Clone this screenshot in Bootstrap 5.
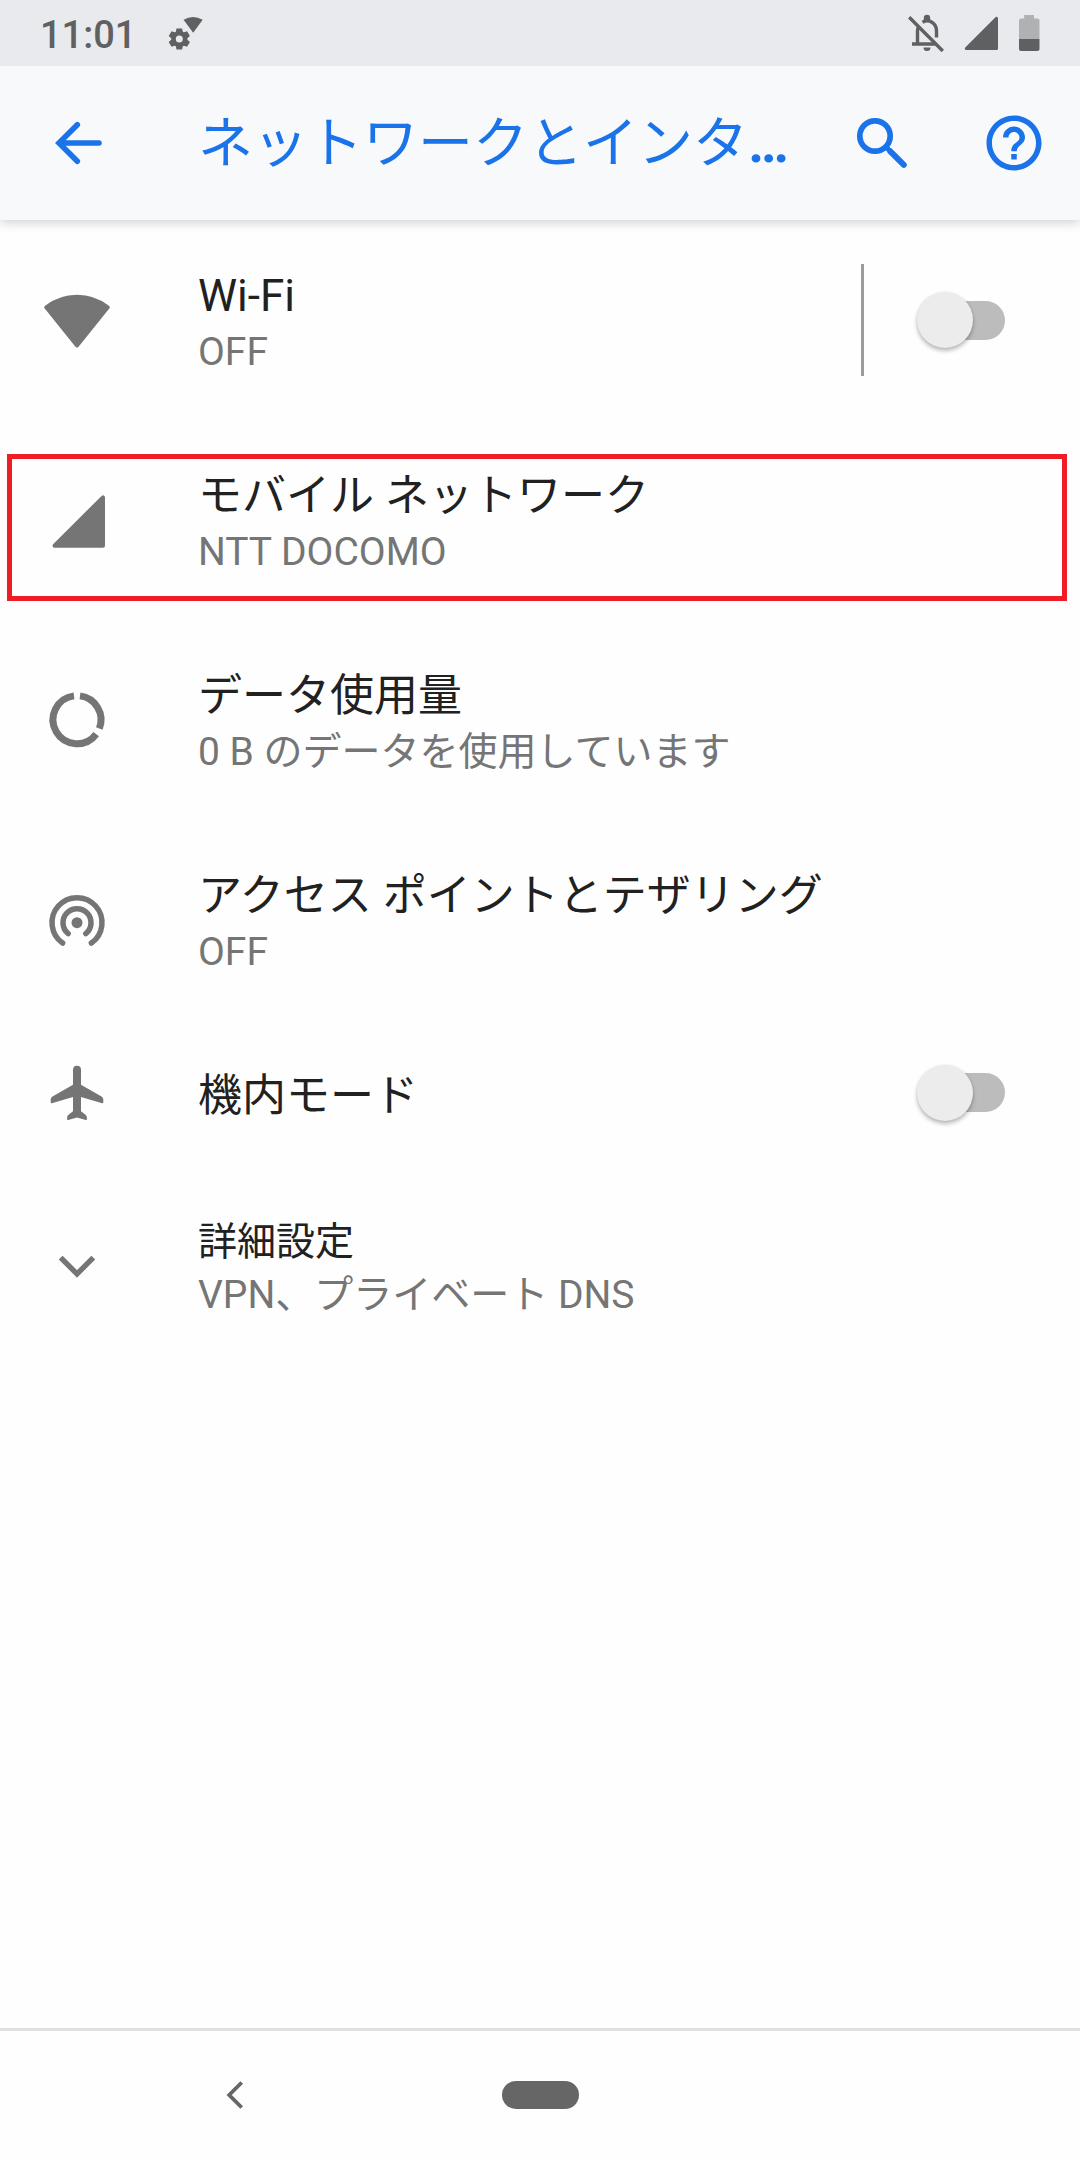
<!DOCTYPE html>
<html lang="ja">
<head>
<meta charset="utf-8">
<meta name="viewport" content="width=device-width, initial-scale=1">
<title>ネットワークとインターネット</title>
<link rel="stylesheet" href="https://cdn.jsdelivr.net/npm/bootstrap@5.3.0/dist/css/bootstrap.min.css">
<style>
  body { font-family: Roboto, "Noto Sans CJK JP", sans-serif; background: #fefefe; color: #212121; }
  svg { display: block; flex: none; }
  .screen { width: 1080px; height: 2160px; }
  .status-bar { height: 66px; background: #e8eaed; color: #5f6062; padding: 0 40px; position: relative; z-index: 2; }
  .clock { font-size: 38px; line-height: 44px; font-weight: 500; width: 128px; padding-top: 3px; }
  .app-bar { height: 154px; background: #f8f9fb; color: #1a73e8; padding: 0 33px 0 44px; box-shadow: 0 2px 11px rgba(0,0,0,.2); z-index: 1; }
  .app-title { font-size: 55px; line-height: 66px; width: 600px; margin: 0 50px 0 88px; font-weight: 400; }
  .app-title b { font-weight: 700; }
  .settings { padding-top: 2px; }
  .setting { height: 200px; padding-left: 44px; padding-right: 75px; }
  .setting-single { height: 148px; }
  .setting-more { height: 196px; }
  .setting svg { color: #757575; margin-right: 88px; }
  .label { font-size: 44px; line-height: 60px; }
  .setting-more .label { font-size: 39px; line-height: 54px; }
  .summary { font-size: 39px; line-height: 52px; color: #757575; }
  .divider { width: 3px; height: 112px; background: #9b9b9b; margin: 0 53px 4px 0; }
  .toggle { width: 88px; height: 56px; margin-bottom: 4px; }
  .setting-single .toggle { margin-bottom: 7px; }
  .toggle-track { width: 78px; height: 39px; background: #bcbcbc; }
  .toggle-thumb { width: 56px; height: 56px; background: #ececec; box-shadow: 0 3px 4px rgba(0,0,0,.26), 0 0 3px rgba(0,0,0,.08); }
  .highlight { left: 7px; top: 32px; width: 1060px; height: 147px; border: 5px solid #ee1c25; }
  .nav-bar { height: 132px; border-top: 3px solid #e0e0e0; color: #666; padding: 0 0 2px 226px; }
  .home-pill { width: 77px; height: 28px; background: #666; margin-left: 258px; }
</style>
<script src="https://cdn.jsdelivr.net/npm/bootstrap@5.3.0/dist/js/bootstrap.bundle.min.js"></script>
</head>
<body>
<div class="screen d-flex flex-column overflow-hidden">
  <div class="status-bar d-flex align-items-center">
    <span class="clock">11:01</span>
    <svg width="36" height="38" viewBox="0 0 36 38" fill="currentColor">
      <path d="M15.500 5.800Q25 .200 34.700 5.800L25.200 18.800Z"/>
      <g transform="translate(11.300 25)">
        <circle r="5.800" fill="none" stroke="currentColor" stroke-width="4.600"/>
        <path d="M-2.800-10.600h5.600l.8 4h-7.200z"/>
        <path d="M-2.800-10.600h5.600l.8 4h-7.200z" transform="rotate(60)"/>
        <path d="M-2.800-10.600h5.600l.8 4h-7.200z" transform="rotate(120)"/>
        <path d="M-2.800-10.600h5.600l.8 4h-7.200z" transform="rotate(180)"/>
        <path d="M-2.800-10.600h5.600l.8 4h-7.200z" transform="rotate(240)"/>
        <path d="M-2.800-10.600h5.600l.8 4h-7.200z" transform="rotate(300)"/>
      </g>
    </svg>
    <svg class="ms-auto" width="36" height="38" viewBox="0 0 36 38" fill="none" stroke="currentColor" stroke-width="3.400">
      <path d="M1.200 3.300L34.800 37"/>
      <path d="M4 30H28M9.500 31V17Q9.500 14.500 10.600 12.500M14.500 8.200C21 4.500 28.500 9 28.500 17V23.500"/>
      <path d="M15.800 7V4A3.200 3.200 0 0 1 22.200 4V7ZM15.500 33.500H22.500A3.500 3.500 0 0 1 15.500 33.500Z" fill="currentColor" stroke="none"/>
    </svg>
    <svg style="margin-left:20px" width="35" height="38" viewBox="0 0 35 38" fill="currentColor" stroke="currentColor" stroke-width="3" stroke-linejoin="round"><path d="M32.500 4.300V34.500H2.300Z"/></svg>
    <svg style="margin-left:20px" width="21" height="38" viewBox="0 0 21 38">
      <path d="M5.200 1H15V4.500H18.500Q20.500 4.500 20.500 6.500V25H0V6.500Q0 4.500 2 4.500H5.200Z" fill="#b0b1b3"/>
      <path d="M0 25H20.500V35Q20.500 37 18.500 37H2Q0 37 0 35Z" fill="currentColor"/>
    </svg>
  </div>

  <header class="app-bar d-flex align-items-center position-relative">
    <svg width="66" height="66" viewBox="0 0 66 66" fill="none" stroke="currentColor" stroke-width="5.600" stroke-linecap="round"><path d="M55 33H15M33.300 14.800L15 33L33.300 51.300"/></svg>
    <h1 class="app-title text-nowrap">ネットワークとインタ<b>…</b></h1>
    <svg width="66" height="66" viewBox="0 0 66 66" fill="none" stroke="currentColor"><circle cx="27" cy="26" r="15.200" stroke-width="5.700"/><path d="M37.500 36.500L41 40" stroke-width="5"/><path d="M42.300 41.300L55.800 54.800" stroke-width="6" stroke-linecap="round"/></svg>
    <svg class="ms-auto" width="66" height="66" viewBox="0 0 24 24" fill="currentColor"><path d="M11 18h2v-2h-2v2zm1-16C6.480 2 2 6.480 2 12s4.480 10 10 10 10-4.480 10-10S17.520 2 12 2zm0 18c-4.410 0-8-3.590-8-8s3.590-8 8-8 8 3.590 8 8-3.590 8-8 8zm0-14c-2.210 0-4 1.790-4 4h2c0-1.100.900-2 2-2s2 .900 2 2c0 2-3 1.750-3 5h2c0-2.250 3-2.500 3-5 0-2.210-1.790-4-4-4z"/></svg>
  </header>

  <main class="settings d-flex flex-column">
    <div class="setting d-flex align-items-center">
      <svg width="66" height="66" viewBox="0 0 66 66" fill="currentColor" stroke="currentColor" stroke-width="4" stroke-linejoin="round"><path d="M2.300 18.300A50 50 0 0 1 63.700 18.300L33 56.500Z"/></svg>
      <div class="flex-grow-1"><div class="label">Wi-Fi</div><div class="summary">OFF</div></div>
      <div class="divider"></div>
      <div class="toggle position-relative d-flex align-items-center justify-content-end"><span class="toggle-track rounded-pill"></span><span class="toggle-thumb rounded-circle position-absolute start-0 top-0"></span></div>
    </div>
    <div class="setting d-flex align-items-center position-relative">
      <svg width="66" height="66" viewBox="0 0 66 66" fill="currentColor" stroke="currentColor" stroke-width="4" stroke-linejoin="round"><path d="M59 8.300V56.700H10.500Z"/></svg>
      <div><div class="label">モバイル ネットワーク</div><div class="summary">NTT DOCOMO</div></div>
      <div class="highlight position-absolute"></div>
    </div>
    <div class="setting d-flex align-items-center">
      <svg width="66" height="66" viewBox="0 0 66 66" fill="none" stroke="currentColor" stroke-width="7"><path d="M36 6.900A24 24 0 0 1 55.300 39.500M52.200 45.100A24 24 0 1 1 30 6.900"/></svg>
      <div><div class="label">データ使用量</div><div class="summary">0 B のデータを使用しています</div></div>
    </div>
    <div class="setting d-flex align-items-center">
      <svg width="66" height="66" viewBox="0 0 66 66" fill="none" stroke="currentColor" stroke-width="5.500" stroke-linecap="round"><circle cx="33" cy="33.700" r="5.500" fill="currentColor" stroke="none"/><path d="M24.200 44.600A14 14 0 1 1 41.800 44.600M18.600 54.100A25 25 0 1 1 47.400 54.100"/></svg>
      <div><div class="label">アクセス ポイントとテザリング</div><div class="summary">OFF</div></div>
    </div>
    <div class="setting setting-single d-flex align-items-center">
      <svg width="66" height="66" viewBox="0 0 66 66" fill="currentColor"><path d="M29 6.700A4 4 0 0 1 37 6.700V21.700L57.500 33.500Q59.300 34.600 59.300 36.500V39.500Q59.300 40.600 58.200 40.200L37 34V48.300L41.500 51.800Q42.900 53 42.900 54.700V56.300Q42.900 57.300 41.800 57L33 54.500L24.200 57Q23.100 57.300 23.100 56.300V54.700Q23.100 53 24.500 51.800L29 48.300V34L7.800 40.200Q6.700 40.600 6.700 39.500V36.500Q6.700 34.600 8.500 33.500L29 21.700Z"/></svg>
      <div class="label flex-grow-1">機内モード</div>
      <div class="toggle position-relative d-flex align-items-center justify-content-end"><span class="toggle-track rounded-pill"></span><span class="toggle-thumb rounded-circle position-absolute start-0 top-0"></span></div>
    </div>
    <div class="setting setting-more d-flex align-items-center">
      <svg width="66" height="66" viewBox="0 0 66 66" fill="none" stroke="currentColor" stroke-width="5.400"><path d="M16.700 22.600L33 38.900L49.300 22.600"/></svg>
      <div><div class="label">詳細設定</div><div class="summary">VPN、プライベート DNS</div></div>
    </div>
  </main>

  <nav class="nav-bar mt-auto d-flex align-items-center">
    <svg width="18" height="28" viewBox="0 0 18 28" fill="none" stroke="currentColor" stroke-width="3.800"><path d="M15.700 1.500L3.200 14L15.700 26.500"/></svg>
    <span class="home-pill rounded-pill"></span>
  </nav>
</div>
</body>
</html>
